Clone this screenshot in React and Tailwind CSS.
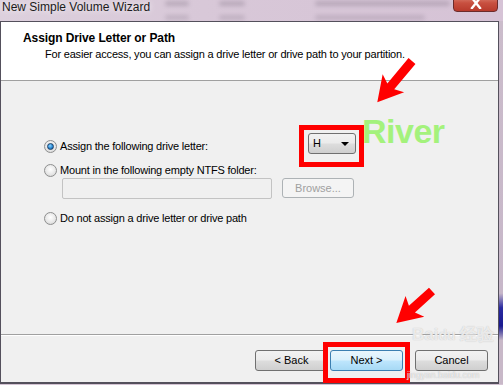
import React from "react"

const btn =
  "flex h-[21px] w-[73px] items-center justify-center rounded-[3px] border border-[#707070] bg-[linear-gradient(to_bottom,#f2f2f2_0%,#ebebeb_48%,#dddddd_52%,#cfcfcf_100%)] text-[11px] text-black"

function Radio({ checked }) {
  return (
    <span className="relative flex h-[13px] w-[13px] items-center justify-center rounded-full border border-[#8e8f8f] bg-[radial-gradient(circle_at_50%_40%,#ffffff_0%,#e6e6e6_60%,#c9c9c9_100%)]">
      {checked && (
        <span className="h-[7px] w-[7px] rounded-full border border-[#1c3f67] bg-[radial-gradient(circle_at_40%_35%,#8ed3ff_0%,#2a8ad4_55%,#0d4c8a_100%)]" />
      )}
    </span>
  )
}

function Option({ checked, children }) {
  return (
    <div className="flex h-[14px] items-center gap-[3px] leading-[14px]">
      <Radio checked={checked} />
      <span className="text-[11px] tracking-[-0.2px] text-black">{children}</span>
    </div>
  )
}

function Arrow({ x, y, angle, len }) {
  const L = len
  const pts = `0,-4.5 ${L - 21},-4.5 ${L - 25},-14 ${L},0 ${L - 25},14 ${L - 21},4.5 0,4.5`
  return (
    <g transform={`translate(${x},${y}) rotate(${angle})`}>
      <polygon points={pts} fill="#ff0000" />
    </g>
  )
}

// blurred desktop behind the title bar
function Smudge({ w }) {
  return <div className="h-[5px] rounded-full bg-[#8a7c8e]" style={{ width: w }} />
}

export default function App() {
  return (
    <div className="relative h-[385px] w-[503px] overflow-hidden bg-[#d4c4d4] font-['Liberation_Sans',Arial,sans-serif]">
      {/* title bar */}
      <div className="relative flex h-[21px] items-start overflow-hidden bg-[linear-gradient(to_right,#ddd0dd,#d8c8d8_40%,#d6c3d6)]">
        <div className="pointer-events-none absolute left-[165px] top-[1px] flex gap-[30px] opacity-40 blur-[2px]">
          <Smudge w={24} />
          <Smudge w={26} />
          <div className="ml-[40px]"><Smudge w={135} /></div>
        </div>
        <div className="pointer-events-none absolute left-[165px] top-[15px] flex gap-[30px] opacity-30 blur-[2px]">
          <Smudge w={24} />
          <Smudge w={26} />
          <div className="ml-[40px]"><Smudge w={110} /></div>
        </div>
        <span className="relative pl-[2px] text-[12px] leading-[14px] text-[#1b1b1b] [text-shadow:0_0_6px_#ffffff]">
          New Simple Volume Wizard
        </span>
        <div className="absolute left-[453px] top-[-8px] flex h-[20px] w-[45px] items-end justify-center rounded-b-[4px] border border-[#6b2b2b] bg-[linear-gradient(to_bottom,#e8a090,#c85040_55%,#b83a2c)] pb-[2px]">
          <svg width="12" height="12" viewBox="0 0 12 12">
            <path d="M2 1 L10 11 M10 1 L2 11" stroke="#ffffff" strokeWidth="2.4" strokeLinecap="square" />
          </svg>
        </div>
      </div>

      <div className="flex">
        {/* window */}
        <div className="flex h-[363px] w-[499px] flex-col border border-[#54505c] border-b-2">
          <div className="h-[59px] border-b border-[#a0a0a0] bg-white pl-[22px] pt-[9px]">
            <div className="text-[12px] font-bold leading-[14px] tracking-[-0.1px] text-black">
              Assign Drive Letter or Path
            </div>
            <div className="pl-[22px] pt-[2px] text-[11px] leading-[14px] tracking-[-0.2px] text-black">
              For easier access, you can assign a drive letter or drive path to your partition.
            </div>
          </div>

          <div className="h-[254px] border-b border-[#a0a0a0] bg-[#f0f0f0] pl-[43px] pt-[52px]">
            <div className="flex items-start">
              <div className="mt-[6px] w-[264px]">
                <Option checked>Assign the following drive letter:</Option>
              </div>
              <div className="flex h-[21px] w-[48px] items-center justify-between rounded-[3px] border border-[#707070] bg-[linear-gradient(to_bottom,#f2f2f2_0%,#ebebeb_48%,#dddddd_52%,#cfcfcf_100%)] pl-[4px] pr-[6px] text-[11px] text-black">
                <span>H</span>
                <span className="h-0 w-0 border-x-[4px] border-t-[4px] border-x-transparent border-t-black" />
              </div>
            </div>
            <div className="mt-[9px]">
              <Option>Mount in the following empty NTFS folder:</Option>
            </div>
            <div className="ml-[18px] mt-[1px] flex items-start gap-[10px]">
              <div className="h-[21px] w-[210px] rounded-[2px] border border-[#c3c3c3] bg-[#f0f0f0]" />
              <div className="flex h-[20px] w-[72px] items-center justify-center rounded-[3px] border border-[#adb2b5] bg-[#f4f4f4] text-[11px] text-[#a0a0a0]">
                Browse...
              </div>
            </div>
            <div className="mt-[12px]">
              <Option>Do not assign a drive letter or drive path</Option>
            </div>
          </div>

          <div className="flex flex-1 justify-end gap-[12px] border-t border-white bg-[#f0f0f0] pr-[10px] pt-[14px]">
            <div className="flex gap-[2px]">
              <div className={btn}>&lt; Back</div>
              <div className="flex h-[21px] w-[73px] items-center justify-center rounded-[3px] border border-[#3c7fb1] bg-[linear-gradient(to_bottom,#eaf6fd_0%,#d9f0fc_48%,#bee6fd_52%,#a7d9f5_100%)] text-[11px] text-black">
                Next &gt;
              </div>
            </div>
            <div className={btn}>Cancel</div>
          </div>
        </div>
        {/* desktop strip */}
        <div className="h-[363px] w-[4px] bg-[linear-gradient(to_bottom,#cbbccb_0%,#c7b7c9_75%,#2a2aa0_79%,#1a1a90_84%,#c8b8c8_88%)]" />
      </div>

      {/* annotations */}
      <div className="pointer-events-none absolute left-[362px] top-[111px] text-[34px] font-bold leading-[40px] tracking-[-0.5px] text-[#a4f27c]">
        River
      </div>
      <div className="pointer-events-none absolute left-[299px] top-[125px] h-[42px] w-[65px] border-[5px] border-[#ff0000]" />
      <div className="pointer-events-none absolute left-[323px] top-[342px] h-[41px] w-[87px] border-[5px] border-[#ff0000]" />

      <div className="pointer-events-none absolute left-[412px] top-[326px] text-[17px] font-bold leading-none text-white/70 [text-shadow:0_0_1px_#b8b8b8]">
        Bai<span className="text-[14px]">du</span> 经验
      </div>
      <div className="pointer-events-none absolute left-[407px] top-[371px] text-[9px] leading-none text-white/70 [text-shadow:0_0_1px_#a8a8a8]">
        jingyan.baidu.com
      </div>

      <svg className="pointer-events-none absolute left-0 top-0" width="503" height="385">
        <Arrow x={412} y={61} angle={130} len={54} />
        <Arrow x={432} y={291} angle={138} len={48} />
      </svg>
    </div>
  )
}
